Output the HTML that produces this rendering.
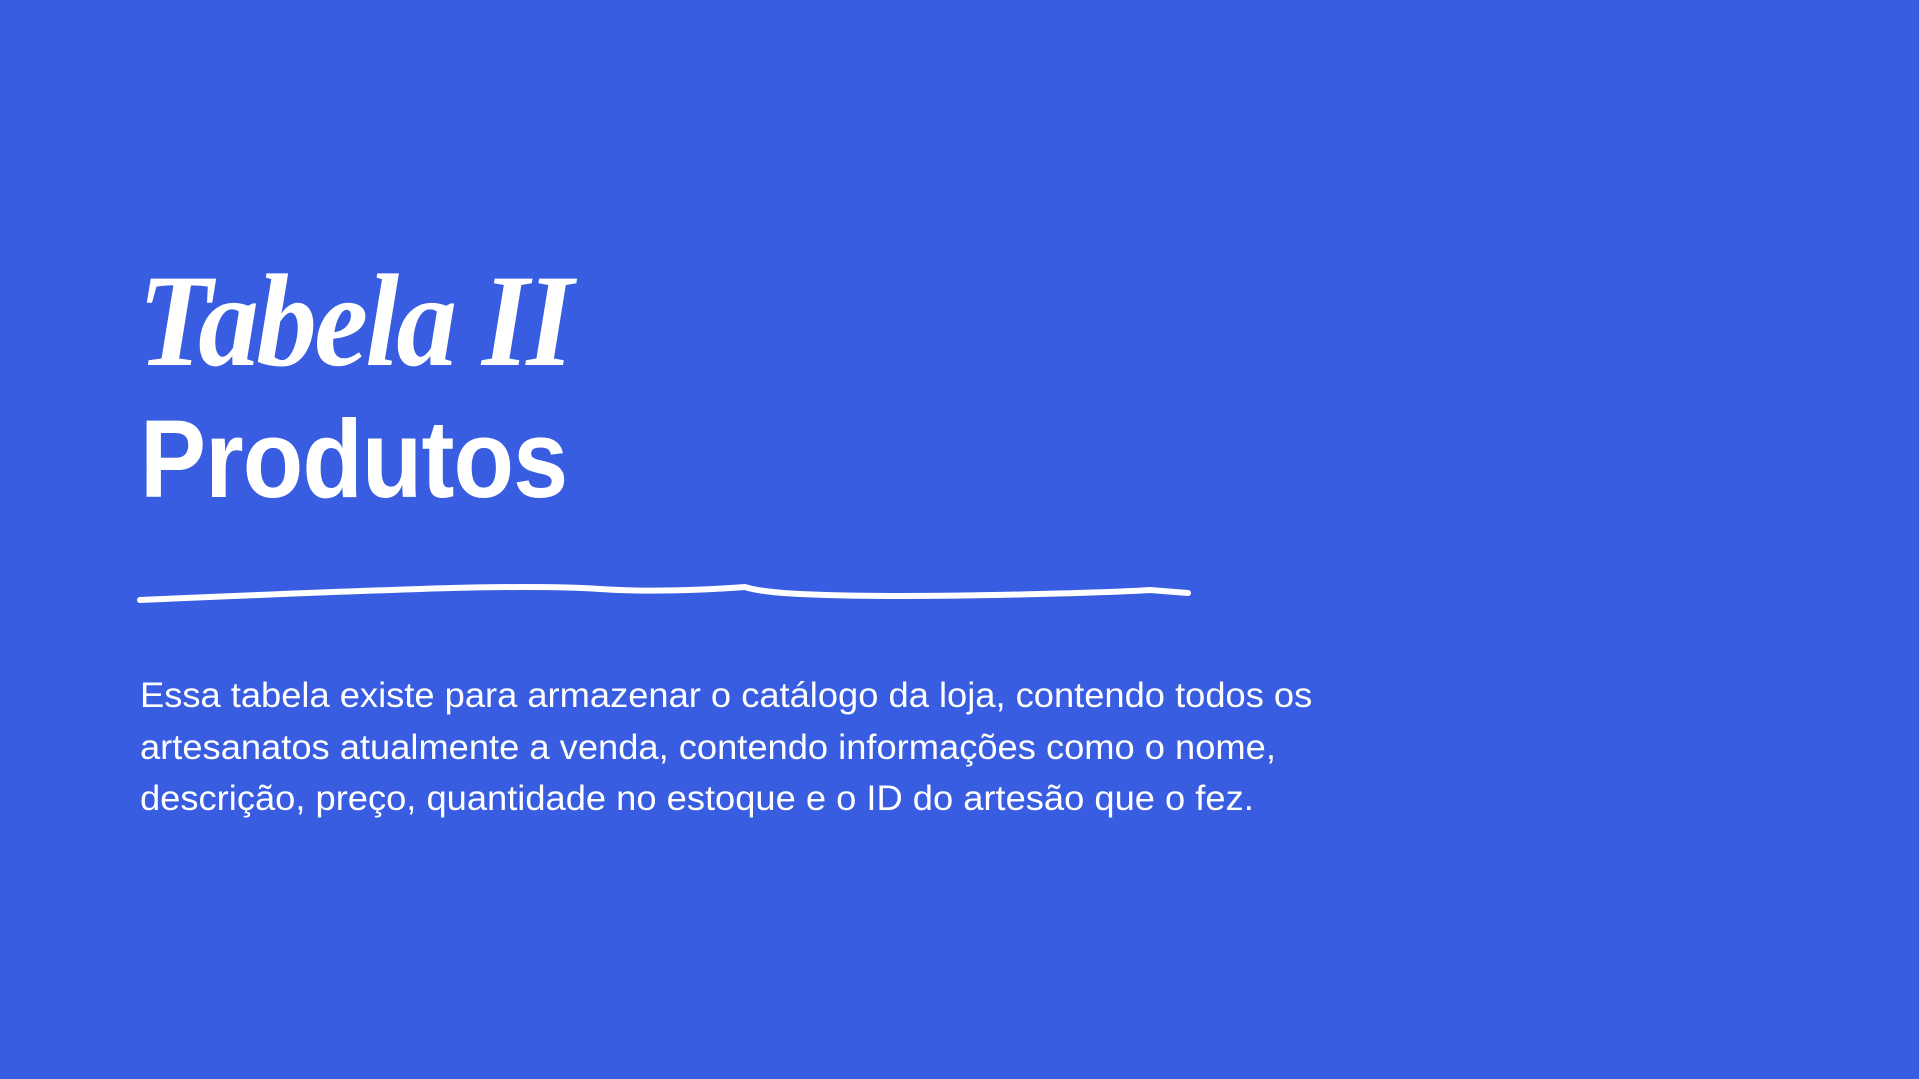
<!DOCTYPE html>
<html><head><meta charset="utf-8"><style>
html,body{margin:0;padding:0}
body{width:1919px;height:1079px;background:#385de0;position:relative;overflow:hidden;font-family:"Liberation Sans",sans-serif;color:#fff}
.t{position:absolute;left:138px;top:255px;font-family:"Liberation Serif",serif;font-style:italic;font-weight:bold;font-size:132px;line-height:1;transform:scaleX(0.92);transform-origin:left top;letter-spacing:-3px}
.p{position:absolute;left:140px;top:405px;font-size:110px;font-weight:bold;line-height:1;letter-spacing:-1px;transform:scaleX(0.9);transform-origin:left top}
.d{position:absolute;left:140px;top:670px;font-size:35px;line-height:51.5px;width:1400px;transform:scaleX(1.037);transform-origin:left top}
svg{position:absolute;left:0;top:0}
</style></head><body>
<div class="t">Tabela II</div>
<div class="p">Produtos</div>
<svg width="1919" height="1079"><path d="M140 600 Q300 593 420 589 T600 589 T745 587 Q760 592 800 594 T900 596 T1040 594 T1150 590 L1188 593" stroke="#fff" stroke-width="6" fill="none" stroke-linecap="round"/></svg>
<div class="d">Essa tabela existe para armazenar o catálogo da loja, contendo todos os<br>artesanatos atualmente a venda, contendo informações como o nome,<br>descrição, preço, quantidade no estoque e o ID do artesão que o fez.</div>
</body></html>
